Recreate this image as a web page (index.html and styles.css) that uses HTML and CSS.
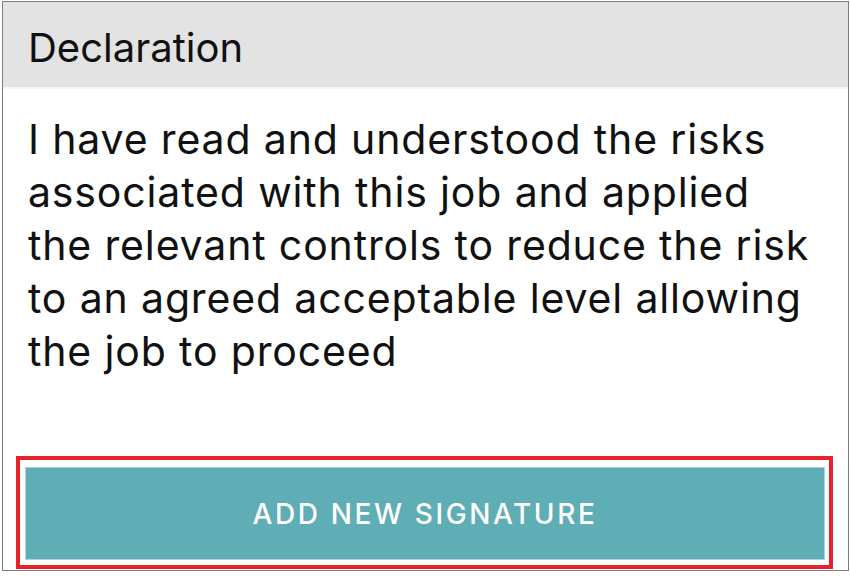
FILE: index.html
```html
<!DOCTYPE html>
<html lang="en">
<head>
  <meta charset="UTF-8" />
  <title>Declaration</title>
  <link rel="stylesheet" href="styles.css">
</head>
<body>

<div class="card">
  <div class="card-header">Declaration</div>
  <p class="declaration-text">I have read and understood the risks associated with this job and applied the relevant controls to reduce the risk to an agreed acceptable level allowing the job to proceed</p>
  <div class="highlight">
    <button class="sign-btn">ADD NEW SIGNATURE</button>
  </div>
</div>

</body>
</html>
```

FILE: styles.css
```css
* {
  box-sizing: border-box;
}

body {
  margin: 0;
  background: #ffffff;
  font-family: Inter, "Liberation Sans", Arial, sans-serif;
}

.card {
  margin: 1px 0 0 2px;
  width: 847px;
  height: 570px;
  border: 1px solid #7d7d7d;
  display: flex;
  flex-direction: column;
  background: #ffffff;
}

.card-header {
  height: 87px;
  background: #e3e3e3;
  border-bottom: 2px solid #f6f6f6;
  padding: 23px 0 0 25px;
  font-size: 40px;
  line-height: 46px;
  color: #111;
}

.declaration-text {
  margin: 24px 0 0;
  padding: 0 25px;
  font-size: 41px;
  line-height: 53px;
  letter-spacing: 0.85px;
  color: #111;
}

.highlight {
  margin: auto 0 1px 13px;
  width: 817px;
  height: 113px;
  border: 4px solid #e8212b;
  padding: 7px 4px 5px 5px;
  display: flex;
}

.sign-btn {
  flex: 1;
  border: 1px solid #a9d5d9;
  background: #5fadb5;
  color: #ffffff;
  font-family: inherit;
  font-size: 28px;
  font-weight: 500;
  letter-spacing: 2.6px;
  cursor: pointer;
}
```
